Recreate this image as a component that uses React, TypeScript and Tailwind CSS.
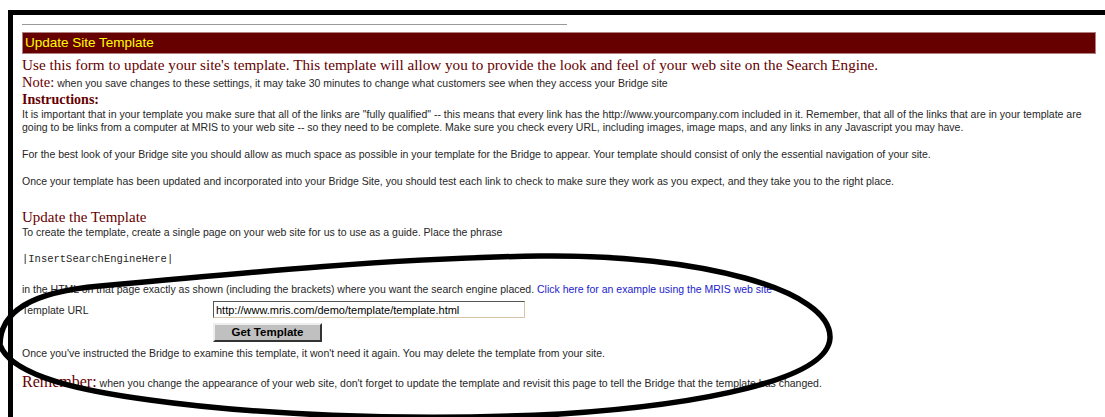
const serif = "font-['Liberation_Serif','Times_New_Roman',serif]";
const sans = "font-['Liberation_Sans',Arial,sans-serif]";

function Heading({ children }: { children: React.ReactNode }) {
  return <div className={`${serif} text-[15px] leading-[18px] text-[#660000]`}>{children}</div>;
}

export default function App() {
  return (
    <div className="relative h-[417px] w-[1105px] overflow-hidden bg-white">
      <div className="ml-[8px] mt-[10px] h-[420px] border-l-[5px] border-t-[5px] border-black">
        <div className={`${sans} pl-[9px] pr-[9px] text-[10.5px] leading-[13px] text-[#262626]`}>
          <div className="mt-[9px] h-[2px] w-[545px] border-t border-[#999]" />
          <div className="mt-[6px] h-[22px] border border-[#b08080] bg-[#660000] pl-[2px] text-[13.5px] leading-[20px] text-[#ffff00]">
            Update Site Template
          </div>
          <div className={`${serif} mt-[2px] text-[15.2px] leading-[18px] text-[#660000]`}>
            Use this form to update your site's template. This template will allow you to provide the look and feel of
            your web site on the Search Engine.
          </div>
          <div>
            <span className={`${serif} text-[14.5px] leading-[16px] text-[#660000]`}>Note:</span> when you save changes
            to these settings, it may take 30 minutes to change what customers see when they access your Bridge site
          </div>
          <div className={`${serif} mt-[1px] text-[14px] font-bold leading-[17px] text-[#660000]`}>Instructions:</div>
          <p>
            It is important that in your template you make sure that all of the links are "fully qualified" -- this
            means that every link has the http://www.yourcompany.com included in it. Remember, that all of the links
            that are in your template are going to be links from a computer at MRIS to your web site -- so they need to
            be complete. Make sure you check every URL, including images, image maps, and any links in any Javascript
            you may have.
          </p>
          <p className="mt-[14px]">
            For the best look of your Bridge site you should allow as much space as possible in your template for the
            Bridge to appear. Your template should consist of only the essential navigation of your site.
          </p>
          <p className="mt-[14px]">
            Once your template has been updated and incorporated into your Bridge Site, you should test each link to
            check to make sure they work as you expect, and they take you to the right place.
          </p>
          <div className="mt-[20px]">
            <Heading>Update the Template</Heading>
          </div>
          <p>
            To create the template, create a single page on your web site for us to use as a guide. Place the phrase
          </p>
          <p className="mt-[14px] font-['Liberation_Mono','Courier_New',monospace]">|InsertSearchEngineHere|</p>
          <p className="mt-[17px]">
            in the HTML on that page exactly as shown (including the brackets) where you want the search engine placed.{" "}
            <a className="text-[#2222cc]">Click here for an example using the MRIS web site</a>
          </p>
          <div className="mt-[5px] grid grid-cols-[191px_1fr] items-start">
            <div className="pt-[3px]">Template URL</div>
            <div className="flex flex-col items-start gap-[5px]">
              <input
                readOnly
                value="http://www.mris.com/demo/template/template.html"
                className="h-[17px] w-[312px] border border-[#d8c4a8] border-l-[#555] border-t-[#555] px-[2px] text-[11px] text-black outline-none"
              />
              <button className="h-[19px] w-[109px] border-2 border-[#eee] border-b-[#333] border-r-[#333] bg-[#c0c0c0] text-[11.5px] font-bold leading-[15px] text-black">
                Get Template
              </button>
            </div>
          </div>
          <p className="mt-[5px]">
            Once you've instructed the Bridge to examine this template, it won't need it again. You may delete the
            template from your site.
          </p>
          <p className="mt-[15px]">
            <span className={`${serif} text-[16px] text-[#660000]`}>Remember:</span> when you change the appearance of
            your web site, don't forget to update the template and revisit this page to tell the Bridge that the
            template has changed.
          </p>
        </div>
      </div>
      {/* hand-drawn loop around the template form */}
      <svg className="pointer-events-none absolute left-0 top-0" width="1105" height="417" viewBox="0 0 1105 417">
        <path
          d="M 0 345 C 0 312, 30 292, 100 286 C 250 272, 400 258, 540 256 C 700 254, 832 290, 830 338 C 828 380, 700 405, 560 414 C 400 422, 250 414, 150 400 C 90 392, 12 378, 0 345 Z"
          fill="none"
          stroke="#000"
          strokeWidth="5.5"
        />
      </svg>
    </div>
  );
}
